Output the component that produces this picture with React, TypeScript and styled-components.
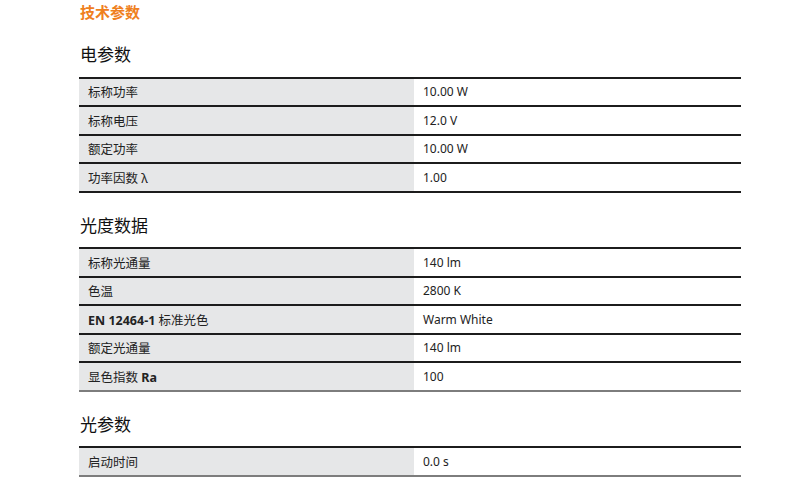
import React from "react";
import styled, { createGlobalStyle } from "styled-components";

const Global = createGlobalStyle`
  html, body { margin: 0; padding: 0; background: #fff; }
  body { font-family: "Noto Sans", "Noto Sans CJK SC", sans-serif; color: #1a1a1a; }
`;

const Page = styled.div`
  padding: 2px 0 0 79px;
  width: 662px;
`;

const Title = styled.h1`
  margin: 0;
  font-size: 15px;
  line-height: 20px;
  font-weight: 600;
  color: #ef801e;
  padding-left: 1px;
  font-family: "Noto Sans CJK SC", sans-serif;
`;

const Section = styled.section`
  margin-top: 20px;
`;

const Heading = styled.h2`
  margin: 0 0 10.5px 1px;
  font-size: 17px;
  line-height: 24px;
  font-weight: 400;
  color: #111;
  font-family: "Noto Sans CJK SC", sans-serif;
`;

const Table = styled.div<{ $endColor: string }>`
  display: flex;
  flex-direction: column;
  border-bottom: 2px solid ${(p) => p.$endColor};
`;

const Row = styled.div`
  display: grid;
  grid-template-columns: 335px 1fr;
  height: 26.5px;
  border-top: 2px solid #1c1c1c;
`;

const Label = styled.div`
  background: #e6e7e8;
  display: flex;
  align-items: center;
  padding-left: 9px;
  font-size: 12.5px;
  color: #222;
  font-family: "Noto Sans", "Noto Sans CJK SC", sans-serif;
  white-space: pre;
  b { font-weight: 700; }
`;

const Value = styled.div`
  display: flex;
  align-items: center;
  padding-left: 9px;
  font-size: 12px;
  color: #222;
  font-family: "Noto Sans", sans-serif;
`;

type Item = { label: React.ReactNode; value: string };

const sections: { title: string; end: string; rows: Item[] }[] = [
  {
    title: "电参数",
    end: "#1c1c1c",
    rows: [
      { label: "标称功率", value: "10.00 W" },
      { label: "标称电压", value: "12.0 V" },
      { label: "额定功率", value: "10.00 W" },
      { label: "功率因数 λ", value: "1.00" },
    ],
  },
  {
    title: "光度数据",
    end: "#7d7d7d",
    rows: [
      { label: "标称光通量", value: "140 lm" },
      { label: "色温", value: "2800 K" },
      { label: <><b>EN 12464-1</b>{" 标准光色"}</>, value: "Warm White" },
      { label: "额定光通量", value: "140 lm" },
      { label: <>{"显色指数 "}<b>Ra</b></>, value: "100" },
    ],
  },
  {
    title: "光参数",
    end: "#7d7d7d",
    rows: [{ label: "启动时间", value: "0.0 s" }],
  },
];

export default function App() {
  return (
    <>
      <Global />
      <Page>
        <Title>技术参数</Title>
        {sections.map((s) => (
          <Section key={s.title}>
            <Heading>{s.title}</Heading>
            <Table $endColor={s.end}>
              {s.rows.map((r, i) => (
                <Row key={i}>
                  <Label>
                    <span>{r.label}</span>
                  </Label>
                  <Value>{r.value}</Value>
                </Row>
              ))}
            </Table>
          </Section>
        ))}
      </Page>
    </>
  );
}
